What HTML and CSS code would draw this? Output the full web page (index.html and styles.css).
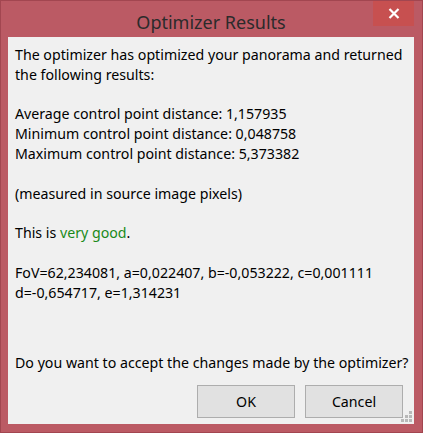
FILE: index.html
```html
<!DOCTYPE html>
<html>
<head>
<meta charset="utf-8">
<link rel="stylesheet" href="styles.css">
</head>
<body>
<div class="window">
  <div class="titlebar">
    <span class="title">Optimizer Results</span>
    <div class="close">
      <svg width="12" height="11" viewBox="0 0 12 11"><path d="M1.5 1 L10.5 10 M10.5 1 L1.5 10" stroke="#fff" stroke-width="2.2" fill="none"/></svg>
    </div>
  </div>
  <div class="client">
    <div class="message">
      <div class="line">The optimizer has optimized your panorama and returned</div>
      <div class="line">the following results:</div>
      <div class="line blank"></div>
      <div class="line">Average control point distance: 1,157935</div>
      <div class="line">Minimum control point distance: 0,048758</div>
      <div class="line">Maximum control point distance: 5,373382</div>
      <div class="line blank"></div>
      <div class="line">(measured in source image pixels)</div>
      <div class="line blank"></div>
      <div class="line">This is <span class="good">very good</span>.</div>
      <div class="line blank"></div>
      <div class="line">FoV=62,234081, a=0,022407, b=-0,053222, c=0,001111</div>
      <div class="line">d=-0,654717, e=1,314231</div>
    </div>
    <div class="question">Do you want to accept the changes made by the optimizer?</div>
    <div class="buttons">
      <button class="btn">OK</button>
      <button class="btn">Cancel</button>
    </div>
    <svg class="grip" width="11" height="11" viewBox="0 0 11 11">
      <g fill="#b8b8b8">
        <rect x="8" y="0" width="3" height="3"/>
        <rect x="4" y="4" width="3" height="3"/>
        <rect x="8" y="4" width="3" height="3"/>
        <rect x="0" y="8" width="3" height="3"/>
        <rect x="4" y="8" width="3" height="3"/>
        <rect x="8" y="8" width="3" height="3"/>
      </g>
    </svg>
  </div>
</div>
</body>
</html>
```
FILE: styles.css
```css
html, body {
  margin: 0;
  padding: 0;
  width: 423px;
  height: 433px;
  overflow: hidden;
}
.window {
  box-sizing: border-box;
  width: 423px;
  height: 433px;
  border: 1px solid #a24650;
  background: #bb5a64;
  padding: 0 8px 8px 7px;
  display: flex;
  flex-direction: column;
  font-family: "Noto Sans", "Open Sans", sans-serif;
}
.titlebar {
  position: relative;
  height: 36px;
  flex: none;
  display: flex;
  align-items: center;
  justify-content: center;
}
.title {
  font-size: 18px;
  color: #2b2b2b;
  padding-top: 5px;
}
.close {
  position: absolute;
  top: 0;
  right: 0;
  width: 41px;
  height: 25px;
  background: #c75050;
  display: flex;
  align-items: center;
  justify-content: center;
}
.client {
  position: relative;
  flex: 1;
  background: #f0f0f0;
  padding: 8px 11px 6px 7px;
  display: flex;
  flex-direction: column;
  font-size: 14.2px;
  color: #000;
}
.line {
  line-height: 19.8px;
  height: 19.8px;
  white-space: nowrap;
}
.good {
  color: #1a8a1a;
}
.question {
  margin-top: auto;
  line-height: 20px;
  white-space: nowrap;
}
.buttons {
  margin-top: 12px;
  display: flex;
  justify-content: flex-end;
  gap: 10px;
}
.btn {
  width: 98px;
  height: 33px;
  box-sizing: border-box;
  background: #e1e1e1;
  border: 1px solid #adadad;
  font-family: inherit;
  font-size: 14.2px;
  color: #000;
  padding: 0;
}
.grip {
  position: absolute;
  right: 2px;
  bottom: 2px;
}
```
